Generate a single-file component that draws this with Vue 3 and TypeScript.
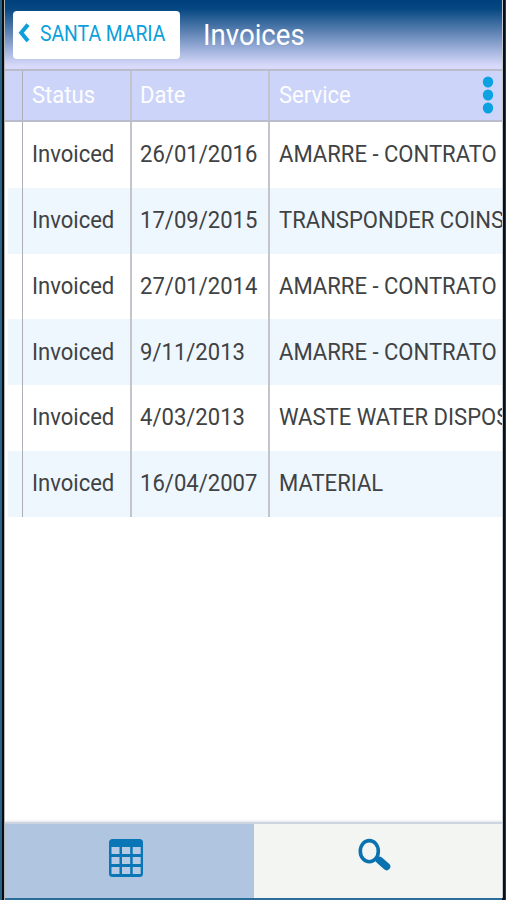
<script setup lang="ts">
import { ref } from 'vue'

interface Invoice {
  status: string
  date: string
  service: string
}

const invoices: Invoice[] = [
  { status: 'Invoiced', date: '26/01/2016', service: 'AMARRE - CONTRATO' },
  { status: 'Invoiced', date: '17/09/2015', service: 'TRANSPONDER COINS' },
  { status: 'Invoiced', date: '27/01/2014', service: 'AMARRE - CONTRATO' },
  { status: 'Invoiced', date: '9/11/2013', service: 'AMARRE - CONTRATO' },
  { status: 'Invoiced', date: '4/03/2013', service: 'WASTE WATER DISPOS' },
  { status: 'Invoiced', date: '16/04/2007', service: 'MATERIAL' },
]

const tab = ref<'table' | 'search'>('table')
</script>

<template>
  <div class="frame">
    <div class="screen">
      <header class="bar">
        <button class="back">
          <svg class="chevron" viewBox="0 0 12 20" width="12" height="20">
            <path d="M10 1.6 L3.2 9.8 L10 18" fill="none" stroke="#0c9fdc" stroke-width="4" />
          </svg>
          <span class="label back-label">SANTA MARIA</span>
        </button>
        <h1 class="label title">Invoices</h1>
      </header>

      <div class="grid-row head">
        <div class="cell"></div>
        <div class="cell"><span class="label head-label">Status</span></div>
        <div class="cell"><span class="label head-label">Date</span></div>
        <div class="cell last">
          <span class="label head-label">Service</span>
          <svg class="dots" viewBox="0 0 12 38" width="12" height="38" fill="#0ca2e2">
            <ellipse cx="6" cy="6" rx="5.2" ry="5.5" />
            <ellipse cx="6" cy="19" rx="5.2" ry="5.5" />
            <ellipse cx="6" cy="32" rx="5.2" ry="5.5" />
          </svg>
        </div>
      </div>

      <main class="rows">
        <div v-for="(item, i) in invoices" :key="i" class="grid-row body-row">
          <div class="cell"></div>
          <div class="cell"><span class="label">{{ item.status }}</span></div>
          <div class="cell"><span class="label">{{ item.date }}</span></div>
          <div class="cell last"><span class="label">{{ item.service }}</span></div>
        </div>
      </main>

      <nav class="tabs">
        <button class="tab" :class="{ active: tab === 'table' }" @click="tab = 'table'">
          <svg viewBox="0 0 34 38" width="34" height="38">
            <rect x="0" y="0" width="34" height="38" rx="3.5" fill="#0b76b5" />
            <g fill="#b6cbe3">
              <rect x="2.5" y="8" width="8" height="7" />
              <rect x="13" y="8" width="8.2" height="7" />
              <rect x="23.7" y="8" width="8" height="7" />
              <rect x="2.5" y="18" width="8" height="7" />
              <rect x="13" y="18" width="8.2" height="7" />
              <rect x="23.7" y="18" width="8" height="7" />
              <rect x="2.5" y="28" width="8" height="7" />
              <rect x="13" y="28" width="8.2" height="7" />
              <rect x="23.7" y="28" width="8" height="7" />
            </g>
          </svg>
        </button>
        <button class="tab search" :class="{ active: tab === 'search' }" @click="tab = 'search'">
          <svg viewBox="0 0 34 34" width="34" height="34">
            <ellipse cx="11.3" cy="13.2" rx="9" ry="10.6" fill="none" stroke="#0b72b0" stroke-width="3.6" />
            <path d="M17.5 19.8 L21 23" stroke="#0b72b0" stroke-width="4.5" />
            <path d="M21.5 22.3 L28.6 28.6" stroke="#0b72b0" stroke-width="7.4" stroke-linecap="round" />
          </svg>
        </button>
      </nav>
    </div>
  </div>
</template>

<style>
body {
  margin: 0;
  overflow: hidden;
}
</style>

<style scoped>
.frame {
  box-sizing: border-box;
  width: 506px;
  height: 900px;
  padding: 0 3px 2px 5px;
  background: linear-gradient(to right, #2c6283 0 2px, #020c14 2px 4.5px, #b5b5b8 4.5px 5px, #2a6d9b 5px 502px, #04111c 502px 505px, #1c3d50 505px);
  font-family: Roboto, sans-serif;
}
.screen {
  display: flex;
  flex-direction: column;
  box-sizing: border-box;
  width: 498px;
  height: 898px;
  overflow: hidden;
  background: #fff;
  border-right: 1px solid #c3c7cb;
}
.label {
  display: block;
  flex: none;
  font-size: 24.5px;
  line-height: 30px;
  white-space: nowrap;
  color: #404244;
  transform: scaleX(0.9);
  transform-origin: 0 50%;
}
.bar {
  display: flex;
  align-items: flex-start;
  flex: none;
  height: 69px;
  background: linear-gradient(#003f7c 0, #064882 9px, #5d82b3 32px, #a0b2dc 50px, #d9dafa 66px, #d9dafa 69px);
}
.back {
  display: flex;
  align-items: center;
  box-sizing: border-box;
  width: 167px;
  height: 48px;
  margin: 11px 0 0 8px;
  padding: 0 0 4px 5px;
  border: 0;
  border-radius: 4px;
  background: #fff;
  font-family: inherit;
}
.chevron {
  flex: none;
  margin-top: -1px;
}
.back-label {
  margin-left: 10px;
  font-size: 22.3px;
  color: #0c9fdc;
  transform: scaleX(0.867);
}
.title {
  margin: 16px 0 0 22.5px;
  font-size: 30px;
  line-height: 38px;
  font-weight: 400;
  color: #fff;
  transform: scaleX(0.92);
}
.grid-row {
  display: grid;
  grid-template-columns: 18px 108.5px 138.5px 1fr;
  flex: none;
}
.cell {
  display: flex;
  align-items: center;
  box-sizing: border-box;
  min-width: 0;
  padding-left: 8.5px;
  overflow: hidden;
  border-right: 2px solid #c4c5cb;
}
.cell:first-child {
  padding: 0;
  border-right: 1px solid #aeafb6;
}
.cell:nth-child(2) {
  padding-left: 9px;
}
.cell.last {
  border-right: 0;
}
.head {
  box-sizing: border-box;
  height: 53px;
  padding-bottom: 0;
  border-top: 2px solid #b9bcca;
  border-bottom: 2px solid #b9bcca;
  background: #ccd4f9;
}
.head .cell {
  padding-bottom: 1px;
}
.head .last {
  justify-content: space-between;
}
.head-label {
  color: #fdfdff;
}
.dots {
  flex: none;
  margin-right: 8px;
  margin-top: -1px;
}
.body-row {
  height: 65.8px;
}
.body-row .cell {
  padding-bottom: 1.2px;
}
.body-row:nth-child(even) {
  background: linear-gradient(to right, #fdfeff 3px, #eff7fe 3px);
}
.tabs {
  display: flex;
  flex: none;
  box-sizing: border-box;
  height: 76px;
  margin-top: auto;
  border-top: 2px solid #cbd5e2;
  box-shadow: 0 -1px 2px #e2e4e8;
}
.tab {
  display: flex;
  align-items: center;
  justify-content: center;
  flex: 1 1 0;
  padding: 0 6px 6px 0;
  border: 0;
  background: #f3f5f2;
}
.search {
  padding-bottom: 12px;
}
.tab.active {
  background: #b0c5df;
}
</style>
